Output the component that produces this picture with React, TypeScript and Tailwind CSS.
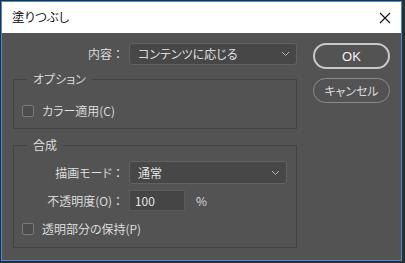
import React from "react";

const font = "[font-family:'Noto_Sans_CJK_JP','Noto_Sans',sans-serif] [font-feature-settings:'palt'] font-[350]";

function Chevron() {
  return (
    <svg width="9" height="6" viewBox="0 0 9 6" className="shrink-0">
      <path d="M1 1 L4.5 4.5 L8 1" stroke="#b4b4b4" strokeWidth="1" fill="none" />
    </svg>
  );
}

function Checkbox() {
  return <div className="w-[12px] h-[12px] rounded-[2px] border border-[#7a7a7a] bg-[#4c4c4c] shrink-0" />;
}

function Colon() {
  return <span className="[font-feature-settings:normal]">：</span>;
}

export default function App() {
  return (
    <div className={`w-[405px] h-[263px] bg-[#2e2e2e] overflow-hidden ${font}`}>
      <div className="ml-[1px] mt-[1px] w-[401px] h-[260px] border border-[#3c8ee0] bg-[#535353] flex flex-col">
        <div className="h-[31px] bg-white flex items-center justify-between pl-[10px] pr-[10px] shrink-0">
          <span className="text-[12.5px] text-black leading-none">塗りつぶし</span>
          <svg width="12" height="12" viewBox="0 0 12 12">
            <path d="M1 1 L11 11 M11 1 L1 11" stroke="#111" strokeWidth="1.1" />
          </svg>
        </div>
        <div className="flex pt-[10px] pl-[11px] text-[12px] text-[#e2e2e2] leading-none">
          <div className="w-[284px] flex flex-col">
            <div className="flex items-center h-[22px]">
              <div className="w-[111px] text-right">内容<Colon /></div>
              <div className="ml-[5px] w-[168px] h-[22px] rounded-[3px] border border-[#626262] bg-[#474747] flex items-center justify-between pl-[8px] pr-[6px]">
                <span className="text-[#f0f0f0]">コンテンツに応じる</span>
                <Chevron />
              </div>
            </div>
            <div className="mt-[14px] h-[50px] border border-[#434343] relative pt-[25px] pl-[8px]">
              <div className="absolute top-[-8px] left-[13px] px-[6px] bg-[#535353] leading-[14px]">オプション</div>
              <div className="flex items-center gap-[8px]">
                <Checkbox />
                <span>カラー適用(C)</span>
              </div>
            </div>
            <div className="mt-[16px] h-[103px] border border-[#434343] relative pt-[15px]">
              <div className="absolute top-[-8px] left-[13px] px-[6px] bg-[#535353] leading-[14px]">合成</div>
              <div className="flex items-center h-[23px]">
                <div className="w-[110px] text-right">描画モード<Colon /></div>
                <div className="ml-[5px] w-[158px] h-[23px] rounded-[3px] border border-[#626262] bg-[#474747] flex items-center justify-between pl-[8px] pr-[6px]">
                  <span className="text-[#f0f0f0]">通常</span>
                  <Chevron />
                </div>
              </div>
              <div className="flex items-center h-[21px] mt-[6px]">
                <div className="w-[110px] text-right">不透明度(O)<Colon /></div>
                <div className="ml-[5px] w-[56px] h-[21px] border border-[#5a5a5a] bg-[#454545] flex items-center pl-[5px]">
                  <span className="text-[#f4f4f4]">100</span>
                </div>
                <span className="ml-[11px]">%</span>
              </div>
              <div className="flex items-center gap-[8px] mt-[12px] pl-[8px]">
                <Checkbox />
                <span>透明部分の保持(P)</span>
              </div>
            </div>
          </div>
          <div className="ml-[16px] w-[77px] flex flex-col">
            <div className="h-[26px] rounded-full border-2 border-[#c8c8c8] flex items-center justify-center text-[13px] text-[#f2f2f2] [font-family:'Liberation_Sans',sans-serif]">
              OK
            </div>
            <div className="mt-[9px] h-[25px] rounded-full border border-[#8a8a8a] flex items-center justify-center text-[12px] text-[#e6e6e6]">
              キャンセル
            </div>
          </div>
        </div>
      </div>
    </div>
  );
}
